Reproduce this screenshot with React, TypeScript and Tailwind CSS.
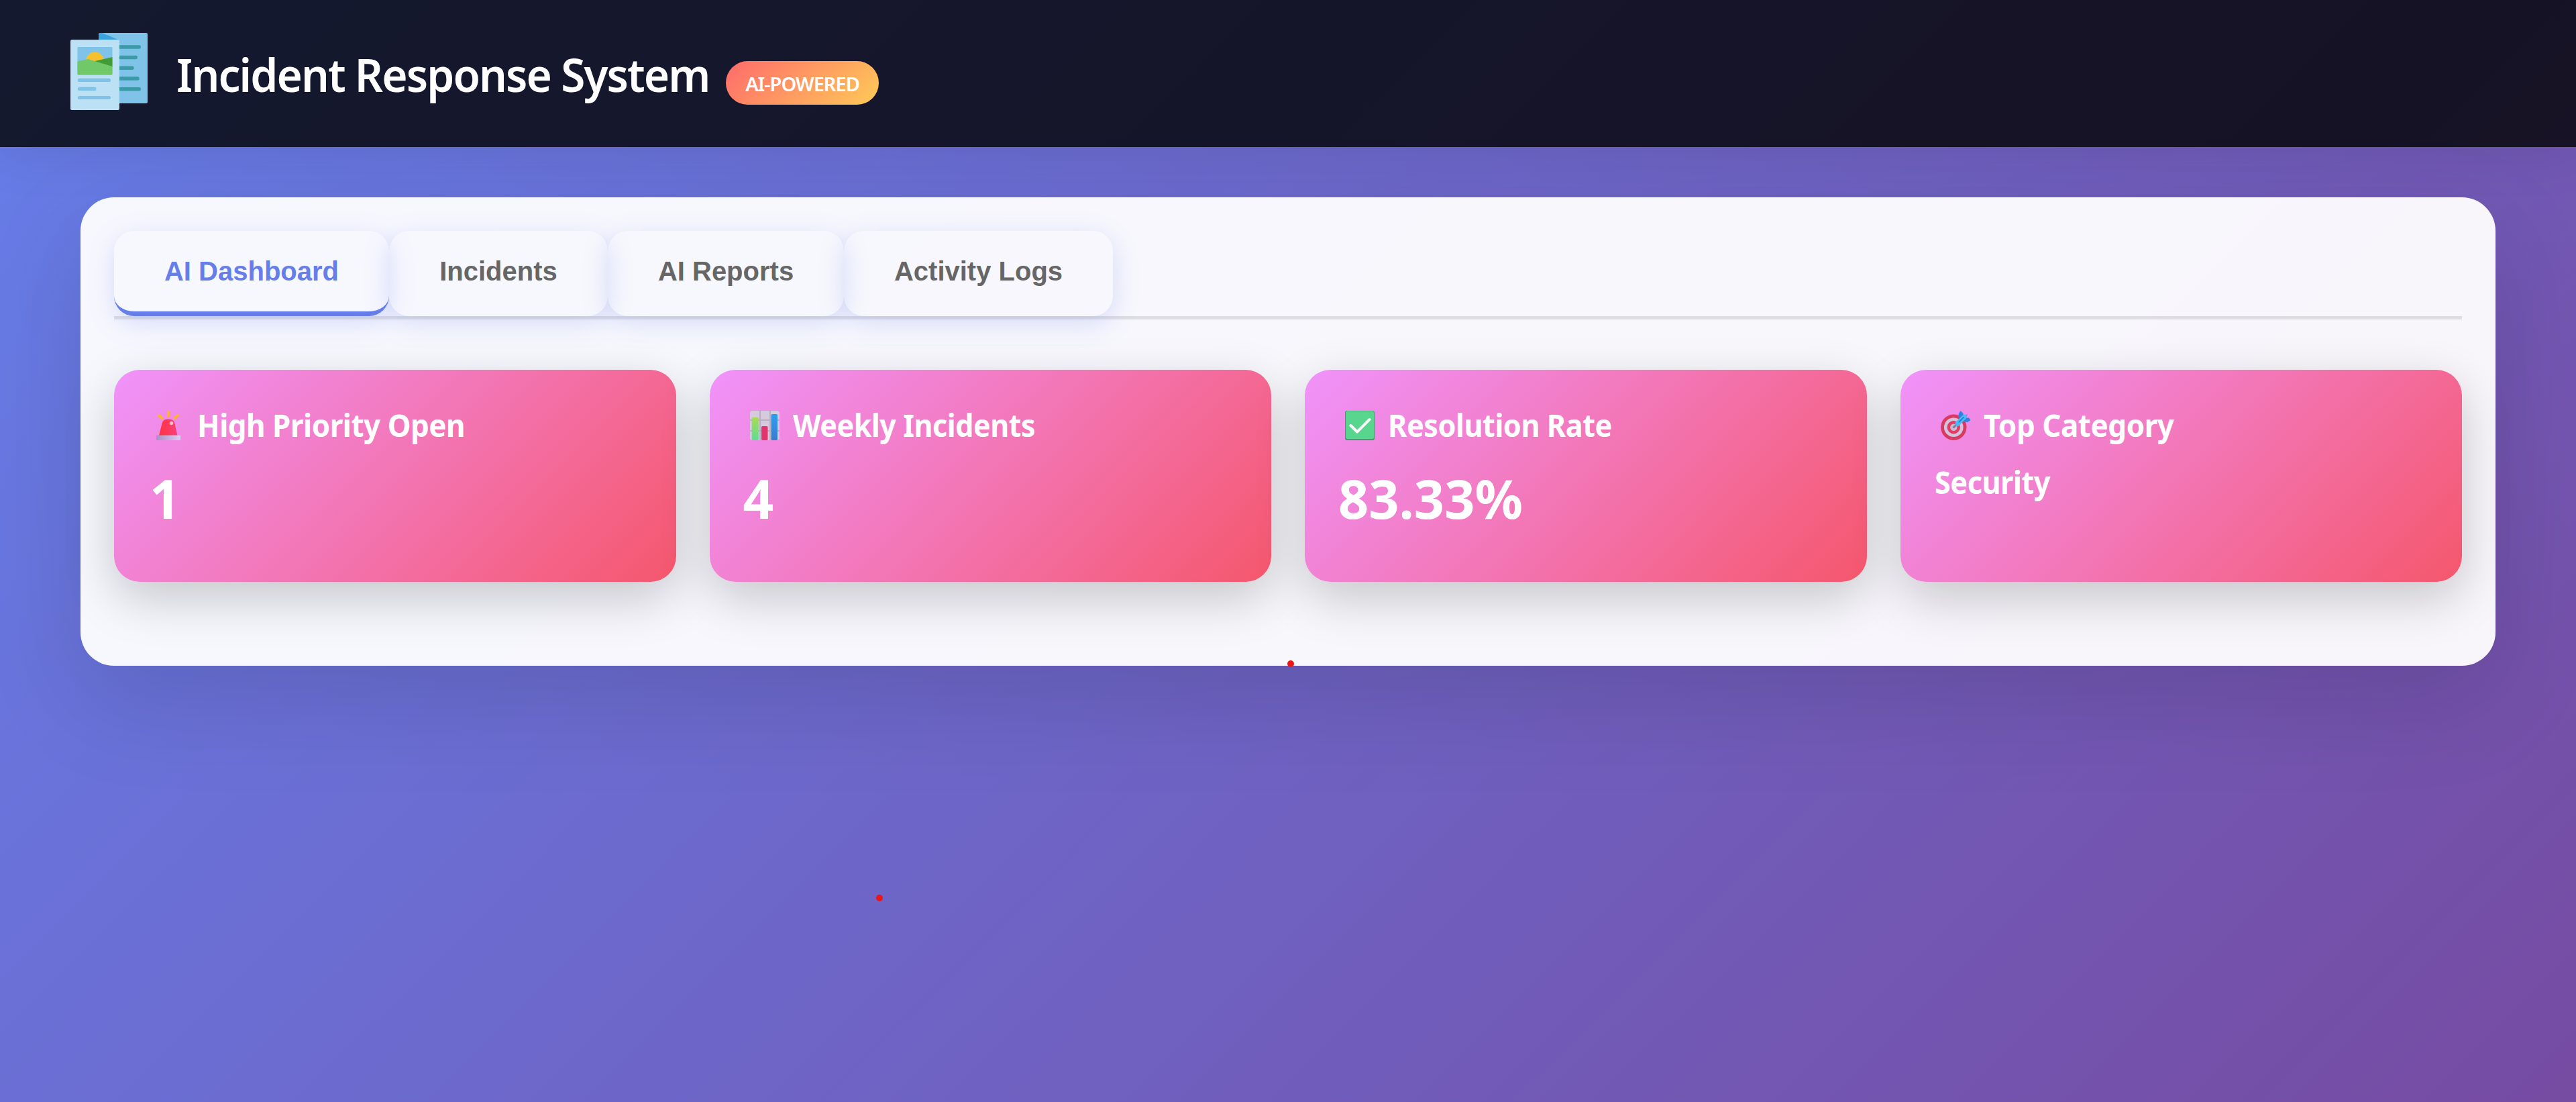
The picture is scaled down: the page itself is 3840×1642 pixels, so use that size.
import type { ReactNode } from "react";

function LogoIcon() {
  return (
    <svg width="115" height="115" viewBox="0 0 115 115" className="shrink-0">
      <rect x="42" y="0" width="73" height="105" rx="2" fill="#7fc3e8" />
      <path d="M42 2a2 2 0 0 1 2-2h3l24 10H42z" fill="#3ba4de" />
      <g stroke="#3a9ba6" strokeWidth="5.4" strokeLinecap="round">
        <path d="M70 21h32.300M70 36.500h27.300M70 52.300h22M70 68h30M70 83.700h32.300" />
      </g>
      <rect x="0" y="10.300" width="73" height="104.700" rx="2" fill="#bde1f4" />
      <rect x="10.500" y="21" width="52" height="41.500" rx="1.500" fill="#7fc3e8" />
      <path d="M23 42a13 13 0 0 1 27 0z" fill="#f6c12f" />
      <path d="M35.500 42.300 62.500 36v15z" fill="#419d33" />
      <path d="M10.500 42.500 26 39l36.500 11v11a1.500 1.500 0 0 1-1.500 1.500H12a1.500 1.500 0 0 1-1.500-1.500z" fill="#71c868" />
      <path d="M13.500 70.400h44M13.500 83.400h22.500M13.500 96.500h44" stroke="#7fc3e8" strokeWidth="5.200" strokeLinecap="round" />
    </svg>
  );
}

function SirenIcon() {
  return (
    <svg width="44" height="44" viewBox="0 0 44 44">
      <defs>
        <linearGradient id="siren" x1="0" x2="1">
          <stop offset="0" stopColor="#ff3440" />
          <stop offset="1" stopColor="#f8407c" />
        </linearGradient>
        <linearGradient id="sirenBase" x1="0" x2="1">
          <stop offset="0" stopColor="#ab8fc6" />
          <stop offset="1" stopColor="#e0cdf2" />
        </linearGradient>
      </defs>
      <path d="M21 2v5.500M7 7l4.500 4M35 7l-4.500 4" stroke="#fbb52c" strokeWidth="3.800" strokeLinecap="round" />
      <path d="M7 37 11.500 19c1-4.500 4-6.500 9.500-6.500s8.500 2 9.500 6.500L34.500 37z" fill="url(#siren)" />
      <circle cx="25.500" cy="18.500" r="2.800" fill="#ffb9bd" />
      <rect x="3" y="36.500" width="36" height="7.500" rx="1" fill="url(#sirenBase)" />
    </svg>
  );
}

function ChartIcon() {
  return (
    <svg width="44" height="44" viewBox="0 0 44 44">
      <defs>
        <linearGradient id="barGreen" x1="0" x2="0" y1="0" y2="1">
          <stop offset="0" stopColor="#a9dc50" />
          <stop offset="1" stopColor="#5fdc96" />
        </linearGradient>
        <linearGradient id="barBlue" x1="0" x2="0" y1="0" y2="1">
          <stop offset="0" stopColor="#2f9df0" />
          <stop offset="1" stopColor="#3b7cc8" />
        </linearGradient>
      </defs>
      <rect width="44" height="44" rx="4" fill="#d6cbde" />
      <path d="M15 0v44M30 0v44M0 14h44M0 30h44" stroke="#b9aec2" strokeWidth="2" />
      <rect x="2.700" y="10" width="10" height="34" rx="1.500" fill="url(#barGreen)" />
      <rect x="17" y="23" width="9.500" height="21" rx="1.500" fill="#e4326c" />
      <rect x="31.500" y="5" width="9.500" height="39" rx="1.500" fill="url(#barBlue)" />
    </svg>
  );
}

function CheckIcon() {
  return (
    <svg width="44" height="44" viewBox="0 0 44 44">
      <rect width="44" height="44" rx="3" fill="#3f9f6c" />
      <rect x="1" y="0.500" width="42" height="41.500" rx="3" fill="#58d68d" />
      <path d="M8.500 22 18 31.500 36.500 13" fill="none" stroke="#fff" strokeWidth="4" strokeLinecap="round" strokeLinejoin="round" />
    </svg>
  );
}

function TargetIcon() {
  return (
    <svg width="46" height="44" viewBox="0 0 46 44" className="shrink-0">
      <circle cx="19.300" cy="24.700" r="19.200" fill="#d83a62" />
      <circle cx="19.300" cy="24.700" r="14.300" fill="#d3c3dc" />
      <circle cx="19.300" cy="24.700" r="9.700" fill="#e63a62" />
      <circle cx="19.300" cy="24.700" r="5.200" fill="#c9b9d2" />
      <path d="M19.500 24.500 24 20" stroke="#80768f" strokeWidth="3" strokeLinecap="round" />
      <path d="M27.500 11 26.600 5 29.500 0 33.500 4 34 8 40 5 37.500 10.500 42 10.500 44.500 14 40 17 33 16z" fill="#2d82e8" />
      <path d="M21.500 17.500 33 6.500 39 5.500 37.500 12 27 22.500q-6 2.500-5.500-5z" fill="#4db8f2" />
      <path d="M27.500 16.500 34 10" stroke="#2584d8" strokeWidth="2" strokeLinecap="round" />
    </svg>
  );
}

function Tab({ label, className, active = false }: { label: string; className: string; active?: boolean }) {
  return (
    <button
      className={`flex h-[127px] items-center justify-center rounded-[30px] font-['Liberation_Sans',sans-serif] text-[40px] font-bold shadow-[0_10px_38px_rgba(102,126,234,0.23)] ${
        active ? "border-b-[7px] border-[#667eea] pb-px text-[#667eea]" : "pb-[8px] text-[#666666]"
      } ${className}`}
    >
      {label}
    </button>
  );
}

function StatCard({ icon, title, titleClass, children }: { icon: ReactNode; title: string; titleClass: string; children: ReactNode }) {
  return (
    <section className="flex h-[316px] flex-col rounded-[38px] bg-[linear-gradient(135deg,#f093fb_0%,#f5576c_100%)] px-[50px] pt-[50px] text-white shadow-[0_25px_75px_rgba(0,0,0,0.2)]">
      <h3 className="flex h-[65px] items-center gap-[20px] pl-[10px] text-[46px] font-bold">
        <span className="flex w-[44px] shrink-0">{icon}</span>
        <span className={`origin-left whitespace-nowrap tracking-[-0.5px] ${titleClass}`}>{title}</span>
      </h3>
      {children}
    </section>
  );
}

export default function App() {
  return (
    <div className="relative h-[1642px] w-[3840px] overflow-hidden bg-[linear-gradient(135deg,#667eea_0%,#764ba2_100%)] font-['Noto_Sans','Open_Sans',sans-serif]">
      <header className="flex h-[219px] items-start bg-black/80 pl-[105px] pt-[49px] text-white shadow-[0_10px_75px_rgba(0,0,0,0.1)]">
        <LogoIcon />
        <h1 className="ml-[43px] mt-[14px] flex h-[96px] w-[799px] shrink-0 origin-left scale-x-[0.952] items-center whitespace-nowrap text-[69px] font-semibold tracking-[-2px]">
          Incident Response System
        </h1>
        <span className="ml-[20px] mt-[42px] flex h-[65px] w-[228px] items-center justify-center rounded-full bg-[linear-gradient(135deg,#ff6b6b,#feca57)] pt-[2px] text-[29px] font-semibold tracking-[-1px]">
          AI-POWERED
        </span>
      </header>

      <main className="mx-[120px] mt-[75px] h-[698px] rounded-[50px] bg-white/95 px-[50px] pt-[50px] shadow-[0_50px_150px_rgba(0,0,0,0.13)]">
        <nav className="flex h-[132px] border-b-[5px] border-black/10">
          <Tab label="AI Dashboard" className="w-[410px]" active />
          <Tab label="Incidents" className="w-[326px]" />
          <Tab label="AI Reports" className="w-[352px]" />
          <Tab label="Activity Logs" className="w-[401px]" />
        </nav>

        <div className="mt-[75px] grid grid-cols-4 gap-[50px]">
          <StatCard icon={<SirenIcon />} title="High Priority Open" titleClass="scale-x-[0.955]">
            <p className="mt-[21px] pl-[3px] text-[80px] font-bold leading-[109px]">1</p>
          </StatCard>
          <StatCard icon={<ChartIcon />} title="Weekly Incidents" titleClass="scale-x-[0.936]">
            <p className="mt-[21px] text-[80px] font-bold leading-[109px]">4</p>
          </StatCard>
          <StatCard icon={<CheckIcon />} title="Resolution Rate" titleClass="scale-x-[0.94]">
            <p className="mt-[21px] origin-left scale-x-[0.99] text-[80px] font-bold leading-[109px]">83.33%</p>
          </StatCard>
          <StatCard icon={<TargetIcon />} title="Top Category" titleClass="scale-x-[0.957]">
            <p className="mt-[20px] origin-left scale-x-[0.94] pl-px text-[46px] font-bold leading-[65px] tracking-[-0.5px]">Security</p>
          </StatCard>
        </div>
      </main>

      <span className="absolute left-[1919px] top-[984px] size-[10px] rounded-full bg-[#ea1717]" />
      <span className="absolute left-[1306px] top-[1333px] size-[10px] rounded-full bg-[#ea1717]" />
    </div>
  );
}
